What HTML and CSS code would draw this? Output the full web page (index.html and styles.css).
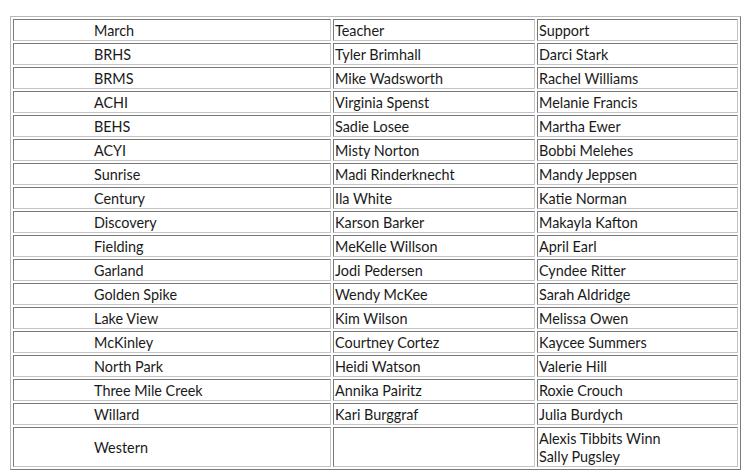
FILE: index.html
```html
<!DOCTYPE html>
<html>
<head>
<meta charset="utf-8">
<link rel="stylesheet" href="styles.css">
</head>
<body>
<div class="wrap">
<table class="roster">
<colgroup><col class="c1"><col class="c2"><col class="c3"></colgroup>
<tr><td class="school">March</td><td>Teacher</td><td>Support</td></tr>
<tr><td class="school">BRHS</td><td>Tyler Brimhall</td><td>Darci Stark</td></tr>
<tr><td class="school">BRMS</td><td>Mike Wadsworth</td><td>Rachel Williams</td></tr>
<tr><td class="school">ACHI</td><td>Virginia Spenst</td><td>Melanie Francis</td></tr>
<tr><td class="school">BEHS</td><td>Sadie Losee</td><td>Martha Ewer</td></tr>
<tr><td class="school">ACYI</td><td>Misty Norton</td><td>Bobbi Melehes</td></tr>
<tr><td class="school">Sunrise</td><td>Madi Rinderknecht</td><td>Mandy Jeppsen</td></tr>
<tr><td class="school">Century</td><td>Ila White</td><td>Katie Norman</td></tr>
<tr><td class="school">Discovery</td><td>Karson Barker</td><td>Makayla Kafton</td></tr>
<tr><td class="school">Fielding</td><td>MeKelle Willson</td><td>April Earl</td></tr>
<tr><td class="school">Garland</td><td>Jodi Pedersen</td><td>Cyndee Ritter</td></tr>
<tr><td class="school">Golden Spike</td><td>Wendy McKee</td><td>Sarah Aldridge</td></tr>
<tr><td class="school">Lake View</td><td>Kim Wilson</td><td>Melissa Owen</td></tr>
<tr><td class="school">McKinley</td><td>Courtney Cortez</td><td>Kaycee Summers</td></tr>
<tr><td class="school">North Park</td><td>Heidi Watson</td><td>Valerie Hill</td></tr>
<tr><td class="school">Three Mile Creek</td><td>Annika Pairitz</td><td>Roxie Crouch</td></tr>
<tr><td class="school">Willard</td><td>Kari Burggraf</td><td>Julia Burdych</td></tr>
<tr><td class="school">Western</td><td></td><td>Alexis Tibbits Winn<br>Sally Pugsley</td></tr>
</table>
</div>
</body>
</html>
```
FILE: styles.css
```css
html, body {
  margin: 0;
  padding: 0;
  background: #ffffff;
}
.wrap {
  padding: 16px 0 0 10px;
}
.roster {
  width: 731px;
  border-collapse: separate;
  border-spacing: 2px;
  border: 1px solid;
  border-color: #b8b8b8 #7a7a7a #7a7a7a #b8b8b8;
  table-layout: fixed;
  font-family: Lato, "Liberation Sans", sans-serif;
  font-size: 14.4px;
  line-height: 18px;
  color: #1a1a1a;
}
.c1 { width: 318px; }
.c2 { width: 202px; }
.c3 { width: 201px; }
.roster td {
  border: 1px solid;
  border-color: #7a7a7a #c4c4c4 #c4c4c4 #7a7a7a;
  padding: 2px 1px 0 1px;
  vertical-align: middle;
  white-space: nowrap;
}
.roster td.school {
  padding-left: 80px;
}
```
